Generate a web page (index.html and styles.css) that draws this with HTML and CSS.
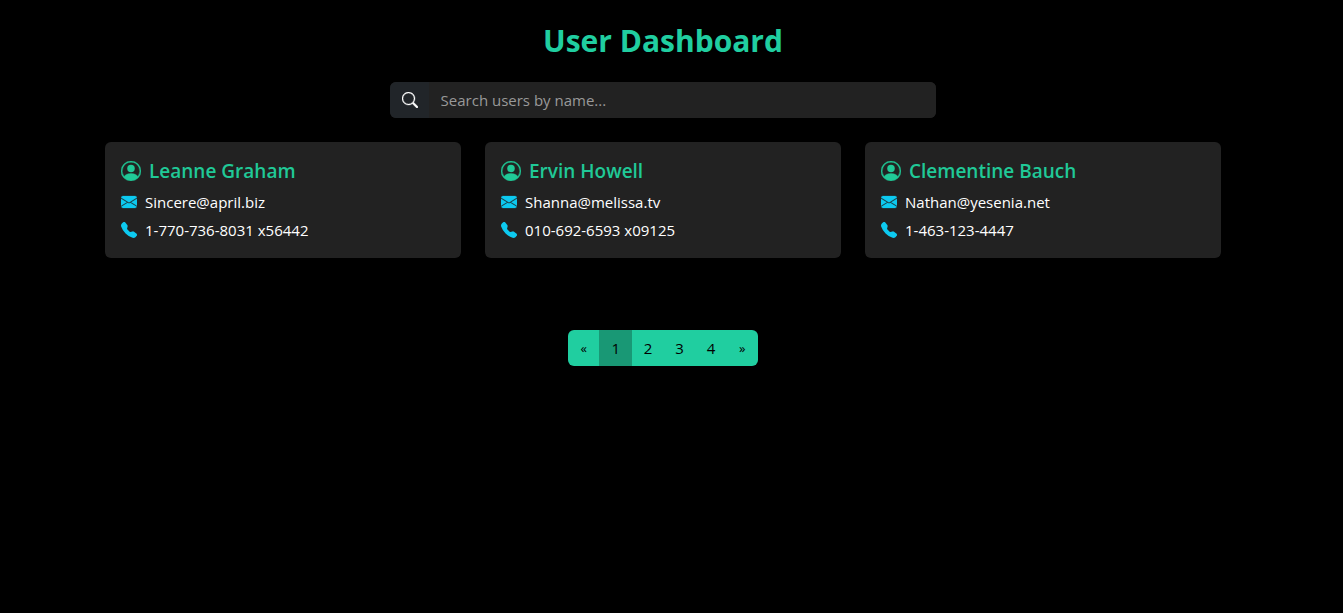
FILE: index.html
```html
<!DOCTYPE html>
<html lang="en">
<head>
<meta charset="utf-8">
<meta name="viewport" content="width=device-width, initial-scale=1">
<title>User Dashboard</title>
<link rel="stylesheet" href="styles.css">
</head>
<body>
<svg class="sprite" aria-hidden="true">
  <symbol id="person" viewBox="0 0 16 16"><path d="M11 6a3 3 0 1 1-6 0 3 3 0 0 1 6 0"/><path stroke="currentColor" stroke-width=".3" fill-rule="evenodd" d="M0 8a8 8 0 1 1 16 0A8 8 0 0 1 0 8m8-7a7 7 0 0 0-5.468 11.37C3.242 11.226 4.805 10 8 10s4.757 1.225 5.468 2.37A7 7 0 0 0 8 1"/></symbol>
  <symbol id="envelope" viewBox="0 0 16 16"><path stroke="currentColor" stroke-width=".25" d="M.05 3.555A2 2 0 0 1 2 2h12a2 2 0 0 1 1.95 1.555L8 8.414zM0 4.697v7.104l5.803-3.558zM6.761 8.83l-6.57 4.027A2 2 0 0 0 2 14h12a2 2 0 0 0 1.808-1.144l-6.57-4.027L8 9.586zm3.436-.586L16 11.801V4.697z"/></symbol>
  <symbol id="phone" viewBox="0 0 16 16"><path fill-rule="evenodd" d="M1.885.511a1.745 1.745 0 0 1 2.61.163L6.29 2.98c.329.423.445.974.315 1.494l-.547 2.19a.68.68 0 0 0 .178.643l2.457 2.457a.68.68 0 0 0 .644.178l2.189-.547a1.75 1.75 0 0 1 1.494.315l2.306 1.794c.829.645.905 1.87.163 2.611l-1.034 1.034c-.74.74-1.846 1.065-2.877.702a18.6 18.6 0 0 1-7.01-4.42 18.6 18.6 0 0 1-4.42-7.009c-.362-1.03-.037-2.137.703-2.877z"/></symbol>
  <symbol id="search" viewBox="0 0 16 16"><path stroke="currentColor" stroke-width=".35" d="M11.742 10.344a6.5 6.5 0 1 0-1.397 1.398h-.001q.044.06.098.115l3.85 3.85a1 1 0 0 0 1.415-1.414l-3.85-3.85a1 1 0 0 0-.115-.1zM12 6.5a5.5 5.5 0 1 1-11 0 5.5 5.5 0 0 1 11 0"/></symbol>
</svg>
<main class="container">
  <h1 class="title">User Dashboard</h1>
  <form class="search" role="search">
    <label class="search-label" for="query" aria-label="Search users"><svg class="icon"><use href="#search"/></svg></label>
    <input class="search-input" id="query" type="text" placeholder="Search users by name...">
  </form>
  <section class="users">
    <article class="card">
      <h2 class="name"><svg class="icon icon-lg"><use href="#person"/></svg>Leanne Graham</h2>
      <p class="detail"><svg class="icon"><use href="#envelope"/></svg>Sincere@april.biz</p>
      <p class="detail"><svg class="icon"><use href="#phone"/></svg>1-770-736-8031 x56442</p>
    </article>
    <article class="card">
      <h2 class="name"><svg class="icon icon-lg"><use href="#person"/></svg>Ervin Howell</h2>
      <p class="detail"><svg class="icon"><use href="#envelope"/></svg>Shanna@melissa.tv</p>
      <p class="detail"><svg class="icon"><use href="#phone"/></svg>010-692-6593 x09125</p>
    </article>
    <article class="card">
      <h2 class="name"><svg class="icon icon-lg"><use href="#person"/></svg>Clementine Bauch</h2>
      <p class="detail"><svg class="icon"><use href="#envelope"/></svg>Nathan@yesenia.net</p>
      <p class="detail"><svg class="icon"><use href="#phone"/></svg>1-463-123-4447</p>
    </article>
  </section>
  <nav class="pagination" aria-label="Pages">
    <button class="page arrow" type="button" aria-label="Previous">«</button>
    <button class="page active" type="button" aria-current="page">1</button>
    <button class="page" type="button">2</button>
    <button class="page" type="button">3</button>
    <button class="page" type="button">4</button>
    <button class="page arrow" type="button" aria-label="Next">»</button>
  </nav>
</main>
</body>
</html>
```
FILE: styles.css
```css
* {
  box-sizing: border-box;
}

body {
  margin: 0;
  padding-right: 17px;
  background: #000;
  color: #fff;
  font-family: "Segoe UI", "Open Sans", "Noto Sans", sans-serif;
  font-size: 15px;
  line-height: 24px;
}

.sprite {
  display: none;
}

.container {
  max-width: 1140px;
  margin: 0 auto;
  padding: 22px 12px;
}

.title {
  margin: 0 0 22px;
  color: #20cea0;
  font-size: 30px;
  font-weight: 700;
  line-height: 38px;
  text-align: center;
}

.icon {
  flex: none;
  width: 16px;
  height: 16px;
  fill: currentColor;
}

.icon-lg {
  width: 20px;
  height: 20px;
}

.search {
  display: flex;
  width: 49%;
  height: 36px;
  margin: 0 auto 24px;
  overflow: hidden;
  border-radius: 6px;
  background: #222;
}

.search-label {
  display: flex;
  align-items: center;
  padding: 0 11px 0 12px;
  background: #212529;
}

.search-input {
  flex: 1;
  min-width: 0;
  padding: 0 12px;
  border: 0;
  outline: 0;
  background: #222;
  color: #fff;
  font: inherit;
}

.search-input::placeholder {
  color: #999;
  opacity: 1;
}

.users {
  display: grid;
  grid-template-columns: repeat(auto-fit, minmax(280px, 1fr));
  gap: 24px;
}

.card {
  display: grid;
  gap: 4px;
  padding: 16px;
  border-radius: 6px;
  background: #222;
}

.name {
  display: flex;
  align-items: center;
  gap: 8px;
  margin: 0 0 2px;
  color: #20c997;
  font-size: 19px;
  font-weight: 600;
  line-height: 26px;
}

.detail {
  display: flex;
  align-items: center;
  gap: 8px;
  margin: 0;
}

.detail .icon {
  color: #0dcaf0;
}

.pagination {
  display: flex;
  width: 190px;
  margin: 72px auto 0;
  overflow: hidden;
  border-radius: 6px;
}

.page {
  flex: 1;
  height: 36px;
  padding: 0;
  border: 0;
  background: #20cea0;
  color: #000;
  font: inherit;
}

.page.active {
  flex: 0 0 33px;
  background: #199875;
}

.page.arrow {
  font-size: 13px;
}
```
